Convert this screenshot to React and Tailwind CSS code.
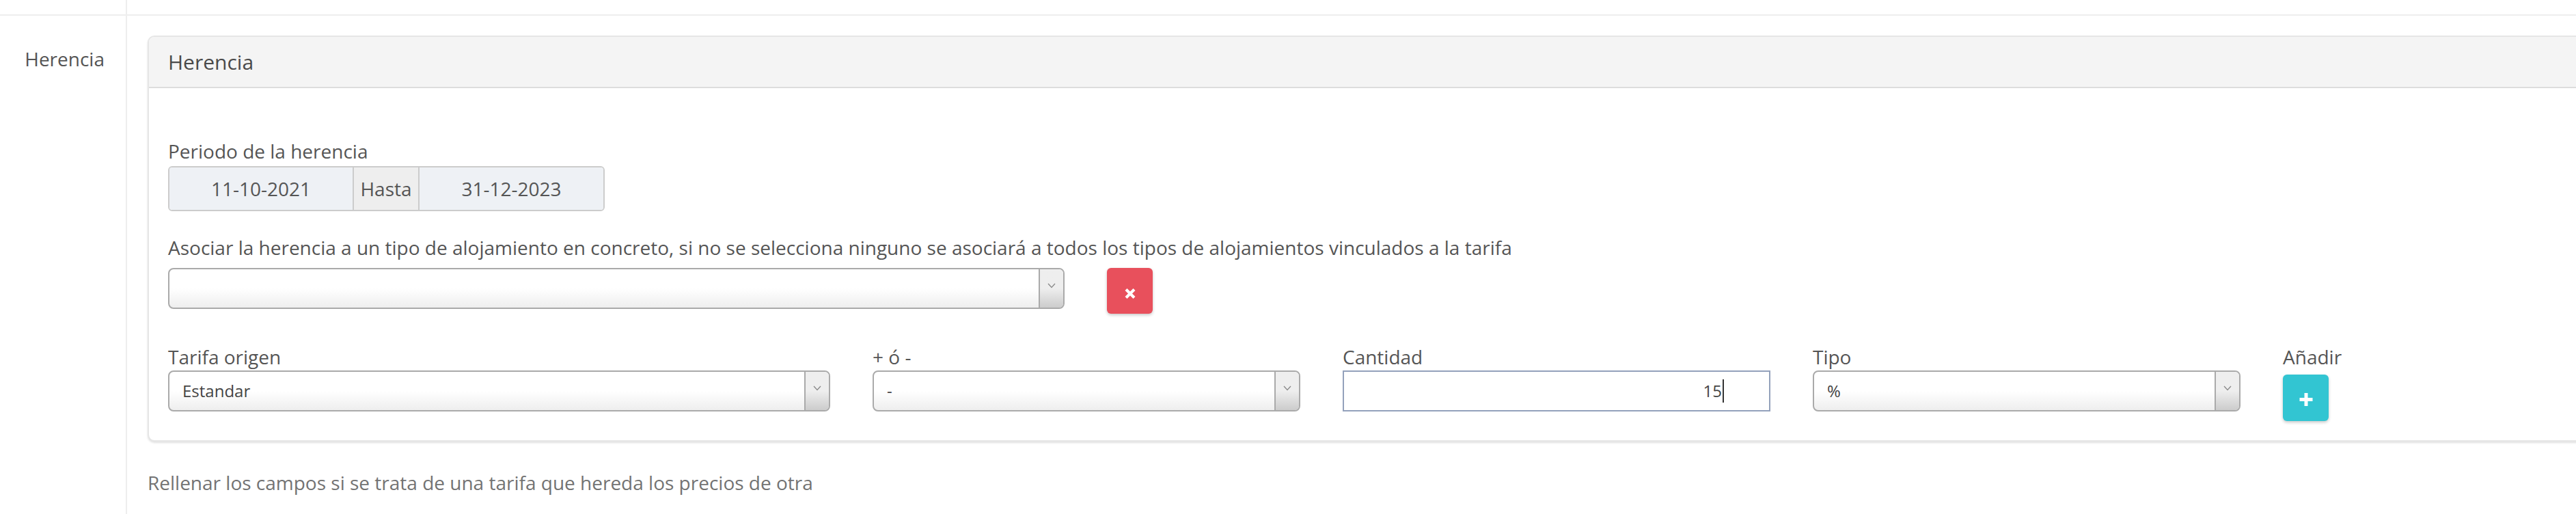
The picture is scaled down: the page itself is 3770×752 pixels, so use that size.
import React from "react";

function Chevron() {
  return (
    <svg width="12" height="8" viewBox="0 0 12 8" className="mb-[8px]">
      <polyline points="1,1 6,6.5 11,1" fill="none" stroke="#8a8a8a" strokeWidth="1.3" />
    </svg>
  );
}

function Select({ value, className }) {
  return (
    <div className={"flex h-[60px] overflow-hidden rounded-[8px] border-2 border-[#aaaaaa] bg-linear-to-b from-white from-50% to-[#eeeeee] " + (className || "")}>
      <div className="flex flex-1 items-center pl-[19px] text-[24px] text-[#444444]">{value}</div>
      <div className="flex w-[36px] items-center justify-center border-l-2 border-[#aaaaaa] bg-linear-to-b from-[#eeeeee] from-50% to-[#cccccc]">
        <Chevron />
      </div>
    </div>
  );
}

export default function App() {
  return (
    <div className="flex h-[752px] flex-col bg-white font-['Open_Sans',sans-serif] text-[#555555]">
      <div className="flex h-[23px] border-b-2 border-[#eeeeee]">
        <div className="w-[186px] border-r-2 border-[#eeeeee]" />
        <div className="flex-1" />
      </div>
      <div className="flex flex-1">
        <div className="w-[186px] border-r-2 border-[#eeeeee] pr-[31px] pt-[43px] text-right text-[28px] leading-[40px]">
          Herencia
        </div>
        <div className="min-w-0 flex-1 overflow-hidden pl-[30px] pt-[29px]">
          <div className="mr-[-20px] rounded-[10px] border-2 border-[#e6e6e6] bg-white shadow-[0_2px_3px_rgba(0,0,0,0.12)]">
            <div className="rounded-t-[8px] border-b-2 border-[#dddddd] bg-[#f4f4f4] px-[28px] pb-[16px] pt-[17px] text-[30px] leading-[40px] text-[#4a4a4a]">
              Herencia
            </div>
            <div className="px-[28px] pb-[28px] pt-[72px]">
              <div className="mb-[2px] text-[28px] leading-[40px]">Periodo de la herencia</div>
              <div className="flex h-[66px] w-[639px] overflow-hidden rounded-[6px] border-2 border-[#cccccc] text-[28px]">
                <div className="flex w-[268px] items-center justify-center bg-[#eef1f5]">11-10-2021</div>
                <div className="flex w-[98px] items-center justify-center border-x-2 border-[#cccccc] bg-[#eeeeee]">Hasta</div>
                <div className="flex flex-1 items-center justify-center bg-[#eef1f5]">31-12-2023</div>
              </div>

              <div className="mb-[10px] mt-[33px] text-[28px] leading-[40px]">
                Asociar la herencia a un tipo de alojamiento en concreto, si no se selecciona ninguno se asociará a todos los tipos de alojamientos vinculados a la tarifa
              </div>
              <div className="flex items-start gap-[62px]">
                <Select value="" className="w-[1312px]" />
                <div className="flex h-[67px] w-[67px] items-center justify-center rounded-[6px] bg-[#e8505c] pt-[8px] shadow-[0_2px_4px_rgba(0,0,0,0.22)]">
                  <svg width="16" height="15" viewBox="0 0 16 15">
                    <path d="M2 1.5 L14 13.5 M14 1.5 L2 13.5" stroke="white" strokeWidth="4.2" />
                  </svg>
                </div>
              </div>

              <div className="mt-[43px] flex items-start gap-[62px]">
                <div className="w-[969px]">
                  <div className="text-[28px] leading-[40px]">Tarifa origen</div>
                  <Select value="Estandar" />
                </div>
                <div className="w-[626px]">
                  <div className="text-[28px] leading-[40px]">+ ó -</div>
                  <Select value="-" />
                </div>
                <div className="w-[626px]">
                  <div className="text-[28px] leading-[40px]">Cantidad</div>
                  <div className="flex h-[60px] items-center justify-end border-2 border-[#93a1bb] bg-white pr-[66px] text-[24px] text-[#444444]">
                    <span>15</span>
                    <span className="ml-[1px] h-[34px] w-[2px] bg-[#333333]" />
                  </div>
                </div>
                <div className="w-[626px]">
                  <div className="text-[28px] leading-[40px]">Tipo</div>
                  <Select value="%" />
                </div>
                <div>
                  <div className="text-[28px] leading-[40px]">Añadir</div>
                  <div className="mt-[6px] flex h-[68px] w-[67px] items-center justify-center rounded-[6px] bg-[#32c5d2] pt-[4px] shadow-[0_2px_4px_rgba(0,0,0,0.22)]">
                    <svg width="20" height="19" viewBox="0 0 20 19">
                      <path d="M10 0 V19 M0.5 9.5 H19.5" stroke="white" strokeWidth="5" />
                    </svg>
                  </div>
                </div>
              </div>
            </div>
          </div>
          <div className="mt-[40px] text-[28px] leading-[40px] text-[#737373]">
            Rellenar los campos si se trata de una tarifa que hereda los precios de otra
          </div>
        </div>
      </div>
    </div>
  );
}
